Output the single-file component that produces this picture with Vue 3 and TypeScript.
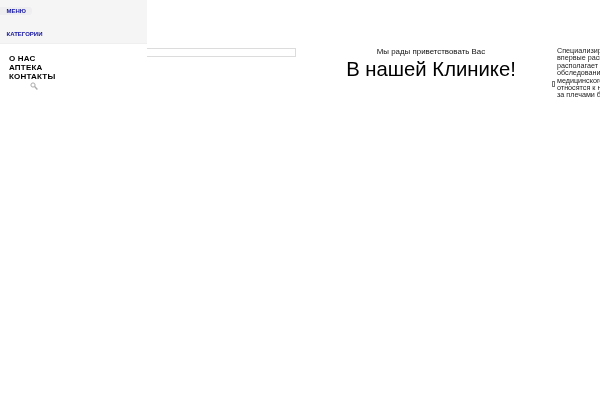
<script setup lang="ts">
const links: string[] = ['О НАС', 'АПТЕКА', 'КОНТАКТЫ']
const lines: string[] = [
  'Специализированная клиника',
  'впервые расположилась в городе',
  'располагает оборудованием для',
  'обследования пациентов всех',
  'медицинского профиля, которые',
  'относятся к нашим врачам',
  'за плечами большой опыт',
]
</script>

<template>
  <div class="page">
    <aside class="side">
      <div class="top">
        <div class="tabrow"><span class="tab">МЕНЮ</span></div>
        <div class="tabrow second"><span class="tab plain">КАТЕГОРИИ</span></div>
      </div>
      <nav class="nav">
        <a v-for="l in links" :key="l" class="link">{{ l }}</a>
        <svg class="search" width="8" height="8" viewBox="0 0 8 8" aria-hidden="true">
          <circle cx="3" cy="3" r="2.1" fill="none" stroke="#aaa" stroke-width="1" />
          <path d="M4.6 4.6 L7.4 7.4" stroke="#aaa" stroke-width="1.4" />
        </svg>
      </nav>
    </aside>
    <div class="inputcol"><input class="field" type="text" /></div>
    <section class="hero">
      <p class="hello">Мы рады приветствовать Вас</p>
      <h1 class="title">В нашей Клинике!</h1>
    </section>
    <div class="tofucol"><span class="tofu"></span></div>
    <section class="about">
      <div v-for="l in lines" :key="l" class="line">{{ l }}</div>
    </section>
  </div>
</template>

<style scoped>
.page {
  width: 600px;
  height: 400px;
  overflow: hidden;
  display: flex;
  align-items: flex-start;
  will-change: transform;
  color: #000;
  font-family: "Liberation Sans", Arial, sans-serif;
}
.side {
  flex: 0 0 147px;
  width: 147px;
}
.top {
  height: 44px;
  background: #f5f5f5;
  border-bottom: 1px solid #efefef;
  box-sizing: border-box;
  padding-top: 7px;
}
.tabrow {
  display: flex;
  height: 8px;
}
.tabrow.second {
  margin-top: 14px;
  height: 10px;
}
.tab {
  display: block;
  padding: 0 0 0 6.5px;
  width: 32px;
  box-sizing: border-box;
  background: #eeeef1;
  border-radius: 0 3px 3px 0;
  font-size: 6px;
  line-height: 8px;
  font-weight: 700;
  color: #1414a0;
  white-space: nowrap;
}
.tab.plain {
  width: auto;
  background: none;
  line-height: 10px;
}
.nav {
  display: flex;
  flex-direction: column;
  padding: 10px 0 0 9px;
}
.link {
  font-size: 8px;
  line-height: 9.2px;
  font-weight: 700;
  letter-spacing: 0.2px;
  color: #000;
}
.search {
  margin: 0 0 0 21px;
}
.inputcol {
  flex: 0 0 149px;
  padding-top: 48px;
}
.field {
  display: block;
  width: 149px;
  height: 9px;
  box-sizing: border-box;
  padding: 0;
  border: 1px solid #dcdcdc;
  border-left: 0;
  background: #fff;
  outline: 0;
}
.hero {
  flex: 0 0 256px;
  box-sizing: border-box;
  padding: 47px 0 0 14px;
  text-align: center;
}
.hello {
  margin: 0;
  font-size: 7.9px;
  line-height: 10px;
  color: #111;
}
.title {
  margin: 0;
  font-size: 20.3px;
  line-height: 24px;
  font-weight: 400;
  white-space: nowrap;
}
.tofucol {
  flex: 0 0 5px;
  padding-top: 81px;
}
.tofu {
  display: block;
  width: 3px;
  height: 6px;
  border: 0.7px solid #777;
  box-sizing: border-box;
}
.about {
  flex: 0 0 auto;
  padding-top: 47px;
  font-size: 7.2px;
  line-height: 7.4px;
  color: #222;
  white-space: nowrap;
}
</style>
